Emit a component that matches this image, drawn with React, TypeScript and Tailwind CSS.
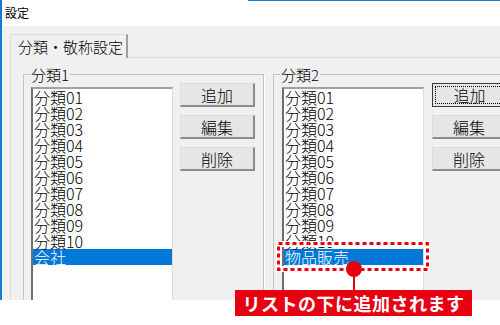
const baseItems = [
  "分類01",
  "分類02",
  "分類03",
  "分類04",
  "分類05",
  "分類06",
  "分類07",
  "分類08",
  "分類09",
  "分類10",
];

function ListBox({ selected }: { selected: string }) {
  return (
    <div className="mt-[4px] h-[230px] w-[142px] border-t-2 border-l-2 border-t-[#a0a0a0] border-l-[#6e6e6e] border-r border-b border-r-[#dcdcdc] border-b-[#dcdcdc] bg-white font-light">
      {baseItems.map((it) => (
        <div key={it} className="h-[16px] pl-[1px] text-[16px] leading-[16px] whitespace-nowrap">
          {it}
        </div>
      ))}
      <div className="h-[16px] bg-[#0078d7] pl-[1px] text-[16px] leading-[16px] text-white whitespace-nowrap">
        {selected}
      </div>
    </div>
  );
}

function Btn({ label, focused }: { label: string; focused?: boolean }) {
  if (focused) {
    return (
      <div className="relative flex h-[24px] w-[75px] shrink-0 items-center justify-center border border-[#3c3c3c] bg-[#e6e6e6] text-[16px] font-light leading-[16px]">
        <div className="absolute inset-[2px] border border-dotted border-black" />
        {label}
      </div>
    );
  }
  return (
    <div className="flex h-[24px] w-[75px] shrink-0 items-center justify-center border-t border-l border-t-[#dcdcdc] border-l-[#dcdcdc] border-r-2 border-b-2 border-r-[#8c8c8c] border-b-[#8c8c8c] bg-[#e6e6e6] text-[16px] font-light leading-[16px]">
      {label}
    </div>
  );
}

function GroupBox({
  title,
  selected,
  focused,
  wide,
}: {
  title: string;
  selected: string;
  focused?: boolean;
  wide?: boolean;
}) {
  return (
    <div
      className={
        wide
          ? "relative flex h-[240px] w-[260px] shrink-0 gap-[8px] border border-[#c4c4c4] pl-[8px] pt-[8px] shadow-[1px_1px_0_white]"
          : "relative flex h-[240px] w-[241px] shrink-0 gap-[7px] border border-[#c4c4c4] pl-[7px] pt-[8px] shadow-[1px_1px_0_white]"
      }
    >
      <div className="absolute -top-[8px] left-[6px] bg-[#f0f0f0] px-[1px] text-[15px] font-light leading-[15px]">
        {title}
      </div>
      <ListBox selected={selected} />
      <div className="flex flex-col gap-[8px]">
        <Btn label="追加" focused={focused} />
        <Btn label="編集" />
        <Btn label="削除" />
      </div>
    </div>
  );
}

export default function App() {
  return (
    <div className="relative h-[325px] w-[500px] overflow-hidden bg-white font-['Noto_Sans_CJK_JP',sans-serif] text-black">
      <div className="flex h-[300px] flex-col border-l-2 border-[#1979d3]">
        <div className="relative h-[26px] shrink-0 bg-white pl-[3px] pt-[7px] text-[12px] leading-[12px]">
          <div className="absolute top-0 right-0 left-[246px] h-[1px] bg-[#1979d3]" />
          設定
        </div>
        <div className="flex flex-1 flex-col overflow-hidden bg-[#f0f0f0] pl-[8px] pt-[8px]">
          <div className="flex h-[24px] shrink-0 items-stretch">
            <div className="w-[118px] border-t border-l border-t-[#dcdcdc] border-l-[#dcdcdc] border-r-2 border-r-[#a0a0a0] pl-[7px] pt-[4px] text-[15px] font-light leading-[15px] whitespace-nowrap">
              分類・敬称設定
            </div>
            <div className="flex-1 border-b border-[#dcdcdc]" />
          </div>
          <div className="flex flex-1 gap-[9px] border-l border-[#dcdcdc] pl-[12px] pt-[16px]">
            <GroupBox title="分類1" selected="会社" />
            <GroupBox title="分類2" selected="物品販売" focused wide />
          </div>
        </div>
      </div>

      <svg className="absolute left-[276px] top-[241px]" width="154" height="31" viewBox="0 0 154 31">
        <rect x="3" y="3" width="148" height="25" fill="none" stroke="white" strokeWidth="6" />
        <rect x="2.5" y="2.5" width="149" height="26" fill="none" stroke="#e60012" strokeWidth="3" strokeDasharray="4 3" />
      </svg>
      <div className="absolute left-[353px] top-[268px] h-[22px] w-[2px] bg-[#e60012]" />
      <div className="absolute left-[346px] top-[261px] h-[16px] w-[16px] rounded-full bg-[#e60012]" />
      <div className="absolute left-[235px] top-[290px] flex h-[26px] w-[237px] items-center justify-center bg-[#e60012] text-[18px] font-bold leading-[26px] tracking-[0.5px] text-white">
        リストの下に追加されます
      </div>
    </div>
  );
}
